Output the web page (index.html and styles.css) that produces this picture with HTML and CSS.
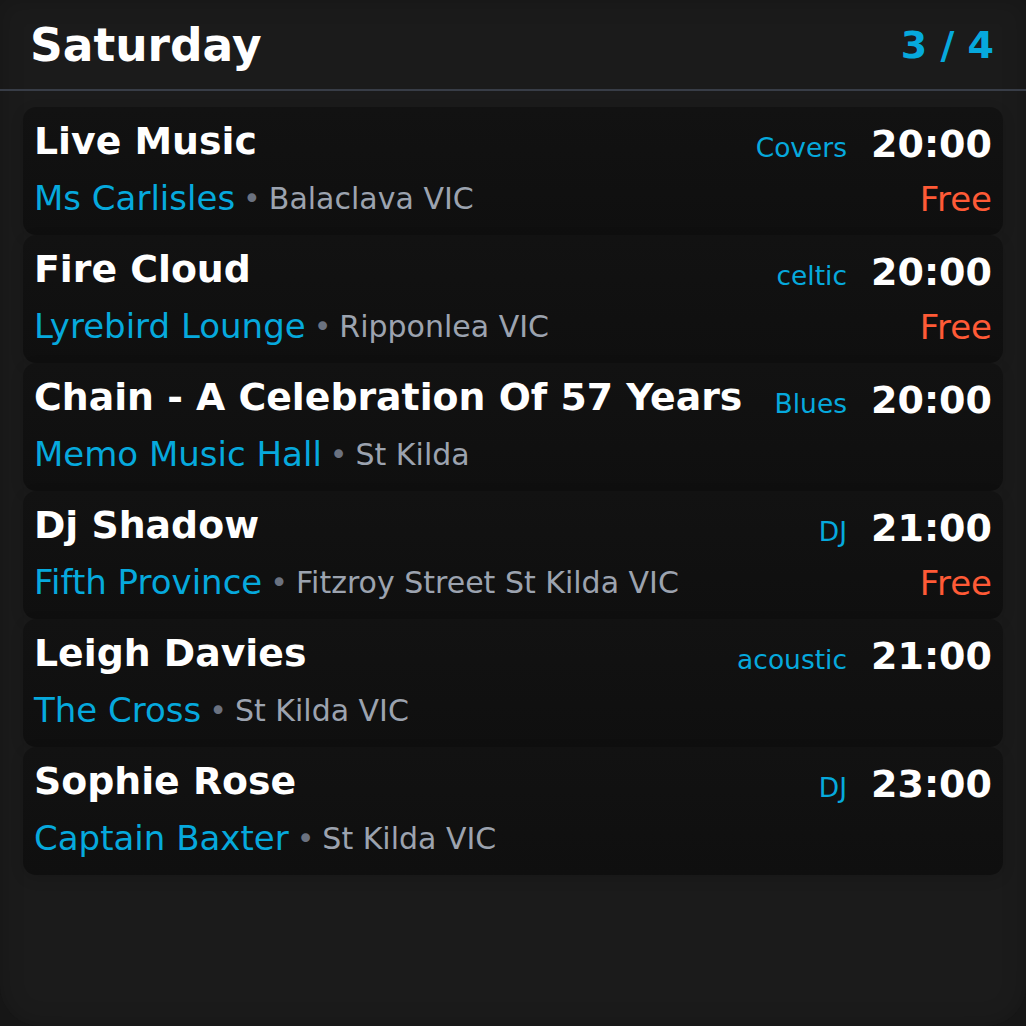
FILE: index.html
```html
<!DOCTYPE html>
<html lang="en">
<head>
<meta charset="utf-8">
<title>Saturday</title>
<link rel="stylesheet" href="styles.css">
</head>
<body>
<div class="panel">
  <header class="head">
    <h1 class="day">Saturday</h1>
    <div class="page">3 / 4</div>
  </header>
  <main class="list">
    <article class="card">
      <div class="row1"><div class="title">Live Music</div><div class="meta"><span class="tag">Covers</span><span class="time">20:00</span></div></div>
      <div class="row2"><div class="place"><span class="venue">Ms Carlisles</span><span class="sep">•</span><span class="loc">Balaclava VIC</span></div><span class="price">Free</span></div>
    </article>
    <article class="card">
      <div class="row1"><div class="title">Fire Cloud</div><div class="meta"><span class="tag">celtic</span><span class="time">20:00</span></div></div>
      <div class="row2"><div class="place"><span class="venue">Lyrebird Lounge</span><span class="sep">•</span><span class="loc">Ripponlea VIC</span></div><span class="price">Free</span></div>
    </article>
    <article class="card">
      <div class="row1"><div class="title">Chain - A Celebration Of 57 Years</div><div class="meta"><span class="tag">Blues</span><span class="time">20:00</span></div></div>
      <div class="row2"><div class="place"><span class="venue">Memo Music Hall</span><span class="sep">•</span><span class="loc">St Kilda</span></div></div>
    </article>
    <article class="card">
      <div class="row1"><div class="title">Dj Shadow</div><div class="meta"><span class="tag">DJ</span><span class="time">21:00</span></div></div>
      <div class="row2"><div class="place"><span class="venue">Fifth Province</span><span class="sep">•</span><span class="loc">Fitzroy Street St Kilda VIC</span></div><span class="price">Free</span></div>
    </article>
    <article class="card">
      <div class="row1"><div class="title">Leigh Davies</div><div class="meta"><span class="tag">acoustic</span><span class="time">21:00</span></div></div>
      <div class="row2"><div class="place"><span class="venue">The Cross</span><span class="sep">•</span><span class="loc">St Kilda VIC</span></div></div>
    </article>
    <article class="card">
      <div class="row1"><div class="title">Sophie Rose</div><div class="meta"><span class="tag">DJ</span><span class="time">23:00</span></div></div>
      <div class="row2"><div class="place"><span class="venue">Captain Baxter</span><span class="sep">•</span><span class="loc">St Kilda VIC</span></div></div>
    </article>
  </main>
</div>
</body>
</html>
```
FILE: styles.css
```css
html, body {
  margin: 0;
  padding: 0;
  background: #161616;
  font-family: "DejaVu Sans", "Liberation Sans", sans-serif;
}
.panel {
  width: 1026px;
  height: 1026px;
  box-sizing: border-box;
  background: #1b1b1b;
  border-radius: 0 0 40px 40px;
  box-shadow: inset 0 0 24px rgba(0,0,0,0.18);
  overflow: hidden;
}
.head {
  display: flex;
  justify-content: space-between;
  align-items: flex-start;
  height: 91px;
  box-sizing: border-box;
  padding: 19px 32px 0 30px;
  border-bottom: 2px solid #383d47;
}
.day {
  margin: 0;
  font-size: 45.5px;
  line-height: 54px;
  font-weight: bold;
  color: #ffffff;
}
.page {
  margin-top: 3px;
  font-size: 38px;
  line-height: 46px;
  font-weight: bold;
  color: #06a9dd;
}
.list {
  display: flex;
  flex-direction: column;
  padding: 16px 23px 0 23px;
}
.card {
  height: 128px;
  box-sizing: border-box;
  padding: 12px 11px 0 11px;
  background: linear-gradient(#121212, #0f0f0f);
  border-radius: 13px;
  box-shadow: 0 4px 14px rgba(0,0,0,0.12);
  display: flex;
  flex-direction: column;
  gap: 12px;
}
.row1 {
  display: flex;
  justify-content: space-between;
  align-items: flex-start;
}
.title {
  font-size: 37.8px;
  line-height: 44px;
  font-weight: bold;
  color: #ffffff;
  white-space: nowrap;
}
.meta {
  display: flex;
  align-items: baseline;
  gap: 24px;
  padding-top: 3px;
}
.tag {
  font-size: 26.5px;
  color: #06a9dd;
}
.time {
  font-size: 38px;
  line-height: 44px;
  font-weight: bold;
  color: #ffffff;
}
.row2 {
  display: flex;
  justify-content: space-between;
  align-items: flex-start;
}
.place {
  display: flex;
  align-items: center;
  white-space: nowrap;
  height: 40px;
}
.venue {
  font-size: 34px;
  line-height: 40px;
  color: #06a9dd;
}
.sep {
  font-size: 30px;
  color: #6b7280;
  margin: 0 8px;
}
.loc {
  font-size: 30px;
  color: #9ca3af;
}
.price {
  font-size: 34px;
  line-height: 40px;
  color: #ff5a36;
  margin-top: 1px;
}
```
